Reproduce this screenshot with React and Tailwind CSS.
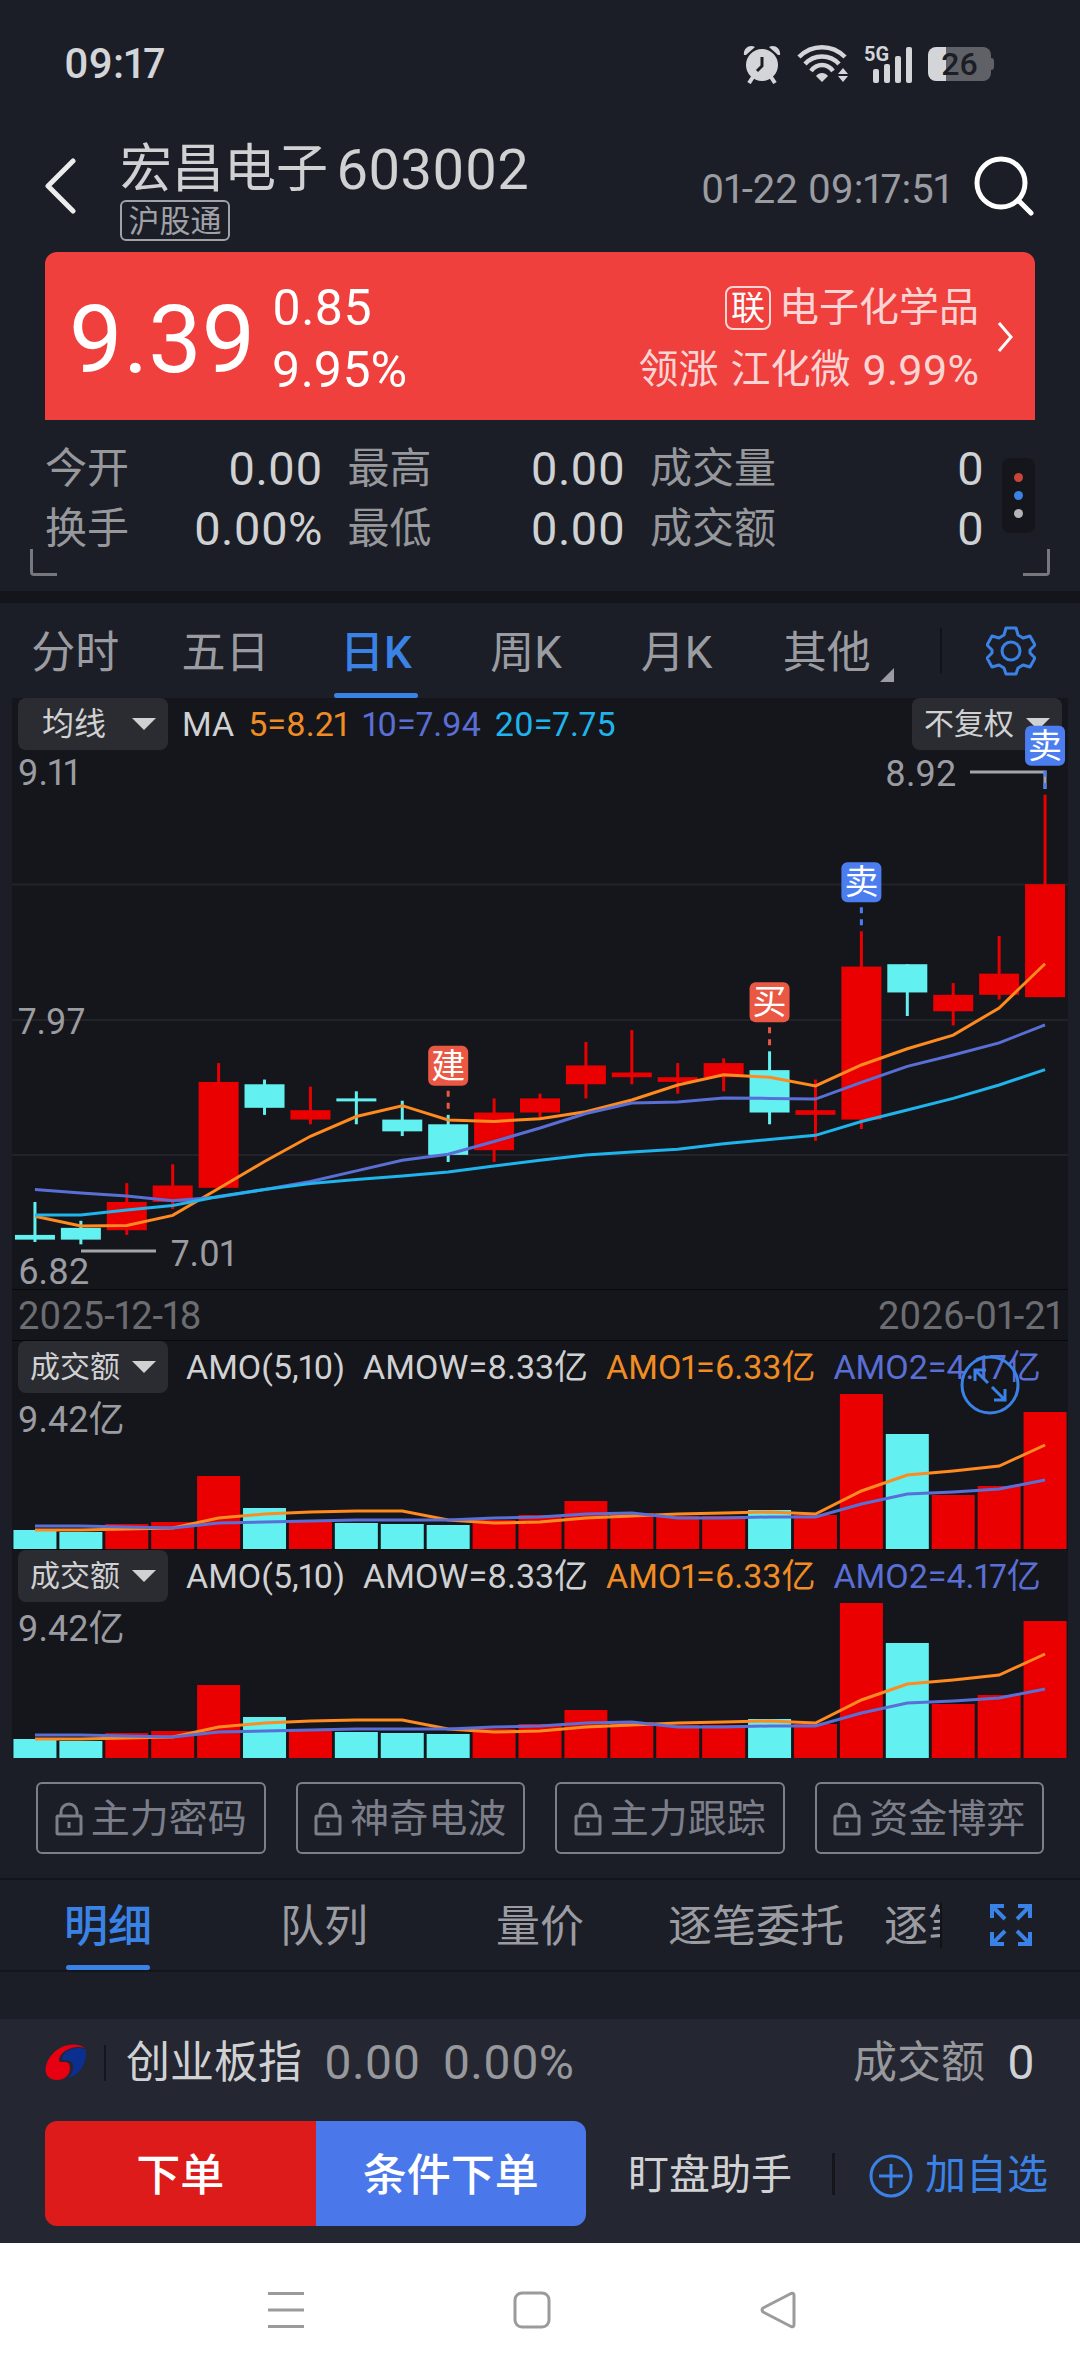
import { Fragment } from "react";

const FONT = "font-['Roboto','Noto_Sans_CJK_SC',sans-serif]";

const UP = "#ea0000";
const DOWN = "#63f0f0";
const ORANGE = "#ff8a1f";
const INDIGO = "#5a6fd6";
const SKY = "#1fb4ec";

// [high, low, body top, body bottom, rising]
const candles = [
  [7.19, 7.02, 7.05, 7.03, false],
  [7.11, 7.01, 7.08, 7.03, false],
  [7.27, 7.05, 7.19, 7.07, true],
  [7.35, 7.16, 7.26, 7.19, true],
  [7.78, 7.25, 7.7, 7.25, true],
  [7.71, 7.56, 7.69, 7.59, false],
  [7.68, 7.52, 7.58, 7.54, true],
  [7.66, 7.52, 7.63, 7.62, false],
  [7.62, 7.47, 7.54, 7.49, false],
  [7.56, 7.36, 7.52, 7.39, false],
  [7.63, 7.36, 7.57, 7.41, true],
  [7.65, 7.54, 7.63, 7.57, true],
  [7.87, 7.63, 7.77, 7.69, true],
  [7.92, 7.69, 7.74, 7.72, true],
  [7.78, 7.65, 7.72, 7.7, true],
  [7.8, 7.66, 7.78, 7.72, true],
  [7.83, 7.52, 7.75, 7.57, false],
  [7.71, 7.45, 7.58, 7.56, true],
  [8.34, 7.5, 8.19, 7.54, true],
  [8.2, 7.98, 8.2, 8.08, false],
  [8.12, 7.94, 8.07, 8.0, true],
  [8.32, 8.05, 8.16, 8.07, true],
  [8.92, 8.06, 8.54, 8.06, true],
];

const ma5 = [7.129, 7.088, 7.09, 7.133, 7.247, 7.362, 7.469, 7.553, 7.599, 7.538, 7.532, 7.544, 7.573, 7.623, 7.687, 7.73, 7.72, 7.683, 7.772, 7.841, 7.899, 8.014, 8.202];
const ma10 = [7.243, 7.228, 7.215, 7.195, 7.211, 7.243, 7.277, 7.322, 7.367, 7.393, 7.447, 7.504, 7.566, 7.61, 7.615, 7.632, 7.63, 7.627, 7.698, 7.766, 7.814, 7.866, 7.942];
const ma20 = [7.135, 7.135, 7.156, 7.175, 7.213, 7.243, 7.268, 7.285, 7.3, 7.317, 7.343, 7.367, 7.39, 7.402, 7.414, 7.437, 7.455, 7.473, 7.532, 7.581, 7.63, 7.687, 7.752];

const amounts = [19, 17, 25, 27, 73, 41, 27, 26, 25, 24, 29, 34, 48, 36, 33, 33, 39, 34, 155, 115, 54, 63, 137];
const amo1 = [19, 19, 20, 21, 31, 35, 37, 38, 38, 29, 26, 27, 31, 33, 35, 36, 37, 35, 58, 74, 78, 83, 104];
const amo2 = [23, 23, 22, 21, 26, 27, 28, 29, 29, 29, 31, 32, 35, 36, 31, 31, 32, 32, 45, 55, 57, 60, 69];

const trades = [
  { day: 9, label: "建", color: "#ea5844" },
  { day: 16, label: "买", color: "#ea5844" },
  { day: 18, label: "卖", color: "#4b7df0" },
  { day: 22, label: "卖", color: "#4b7df0" },
];

const STEP = 1056 / 23;
const cx = (i) => STEP * (i + 0.5);
const py = (p) => (9.11 - p) * 235.4;
const line = (values, y) => values.map((v, i) => `${cx(i)},${y(v)}`).join(" ");

function StatusBar() {
  return (
    <header className="flex h-32 items-center justify-between pr-[86px] pl-16 text-[#d3d5d8]">
      <span className="text-[42px] leading-none font-medium">09:17</span>
      <div className="flex items-center gap-4">
        {/* Alarm */}
        <svg className="h-10 w-[38px]" viewBox="0 0 38 40" fill="none">
          <circle cx="19" cy="21" r="16" fill="currentColor" />
          <path d="M10 33l-4 6M28 33l4 6" stroke="currentColor" strokeWidth="4" />
          <path d="M1 11C0 5 6 0 12 3L3 11zM37 11C38 5 32 0 26 3l9 8z" fill="currentColor" />
          <path d="M19 13v9l-5 5" stroke="#1b1e27" strokeWidth="3" />
        </svg>
        {/* Wi-Fi */}
        <svg className="h-10 w-[51px]" viewBox="0 0 51 40" fill="none" stroke="currentColor" strokeWidth="4.5">
          <path d="M2 13C15 0 35 0 48 13" />
          <path d="M8 20C17 10 33 10 42 20" />
          <path d="M14 27C20 19 30 19 36 27" />
          <path d="M25 38l-6-6c3-4 9-4 12 0z" fill="currentColor" stroke="none" />
          <path d="M46 24l5 6H41zM46 38l5-6H41z" fill="currentColor" stroke="none" />
        </svg>
        {/* Signal */}
        <div className="relative h-10 w-12">
          <span className="absolute top-0 left-0 text-xl leading-5 font-bold">5G</span>
          <svg className="h-10 w-12" viewBox="0 0 48 40" fill="currentColor">
            <rect x="9" y="25" width="6" height="14" rx="2" />
            <rect x="20" y="20" width="6" height="19" rx="2" />
            <rect x="31" y="12" width="6" height="27" rx="2" />
            <rect x="42" y="3" width="6" height="36" rx="2" />
          </svg>
        </div>
        {/* Battery */}
        <div className="flex items-center">
          <div className="flex h-[34px] w-[63px] items-center justify-center rounded-lg bg-linear-to-r from-[#d3d5d8] from-29% to-[#606166] to-29% text-[32px] leading-none font-medium text-[#1b1e27]">
            26
          </div>
          <div className="h-3 w-[3px] rounded-r bg-[#606166]" />
        </div>
      </div>
    </header>
  );
}

function TitleBar() {
  return (
    <div className="flex h-[124px] items-center px-[45px]">
      <button aria-label="返回" className="mb-2 w-[75px]">
        <svg className="h-14 w-8" viewBox="0 0 32 56" fill="none" stroke="#ececec" strokeWidth="5" strokeLinecap="round" strokeLinejoin="round">
          <path d="M28 3L3 28l25 25" />
        </svg>
      </button>
      <div>
        <h1 className="flex items-center gap-2 text-[52px] leading-[60px] text-[#d0d1d3]">
          宏昌电子
          <span className="text-[56px]">603002</span>
        </h1>
        <span className="flex h-[41px] w-[110px] items-center justify-center rounded-md border-2 border-[#a0a2a8] pt-0.5 text-[31px] leading-none text-[#a0a2a8]">
          沪股通
        </span>
      </div>
      <time className="ml-auto text-[40px] leading-none text-[#9b9ca1]">01-22 09:17:51</time>
      <button aria-label="搜索" className="mb-2 ml-[22px]">
        <svg className="block size-[62px]" viewBox="0 0 62 62" fill="none" stroke="#fff" strokeWidth="5" strokeLinecap="round">
          <circle cx="28" cy="28" r="24" />
          <path d="M45 45l13 13" />
        </svg>
      </button>
    </div>
  );
}

function PriceCard() {
  return (
    <section className="mx-[45px] flex h-[168px] items-center rounded-t-xl bg-[#ef403e] pt-1.5 pr-5 pl-6 text-white">
      <span className="text-[95px] leading-none">9.39</span>
      <div className="ml-4 flex flex-col text-[50px] leading-[62px]">
        <span>0.85</span>
        <span>9.95%</span>
      </div>
      <div className="ml-auto flex flex-col items-end text-[40px] leading-[62px] text-[#fbd5d4]">
        <span className="flex items-center gap-2">
          <span className="flex h-[44px] w-[46px] items-center justify-center rounded-lg border-2 border-[#fbd5d4] text-[34px] leading-none text-white">联</span>
          电子化学品
        </span>
        <span className="flex gap-3">
          <span>领涨</span>
          <span>江化微</span>
          <span className="text-[43px]">9.99%</span>
        </span>
      </div>
      <svg className="mb-1 ml-4 h-8 w-5" viewBox="0 0 20 32" fill="none" stroke="currentColor" strokeWidth="3">
        <path d="M4 2l12 14L4 30" />
      </svg>
    </section>
  );
}

const quotes = [
  ["今开", "0.00"],
  ["最高", "0.00"],
  ["成交量", "0"],
  ["换手", "0.00%"],
  ["最低", "0.00"],
  ["成交额", "0"],
];

function Quotes() {
  return (
    <section className="relative flex h-[171px] items-start px-[45px] pt-[18px]">
      <dl className="grid flex-1 grid-cols-[275fr_275fr_331fr] gap-x-[25px]">
        {quotes.map(([label, value]) => (
          <div key={label} className="flex h-[60px] items-center justify-between leading-none">
            <dt className="pt-0.5 text-[42px] text-[#97989c]">{label}</dt>
            <dd className="text-[47px] text-[#d0d1d3]">{value}</dd>
          </div>
        ))}
      </dl>
      <div className="mt-5 ml-[18px] flex h-[75px] w-[33px] flex-col items-center justify-center gap-[9px] rounded-lg bg-[#15161b]">
        <i className="size-[9px] rounded-full bg-[#c9453a]" />
        <i className="size-[9px] rounded-full bg-[#3b82e6]" />
        <i className="size-[9px] rounded-full bg-[#b5b5b8]" />
      </div>
      <i className="absolute bottom-[15px] left-[30px] h-[27px] w-[27px] rounded-bl border-b-[3px] border-l-[3px] border-[#76787d]" />
      <i className="absolute right-[30px] bottom-[15px] h-[27px] w-[27px] rounded-br border-r-[3px] border-b-[3px] border-[#76787d]" />
    </section>
  );
}

function GearIcon() {
  return (
    <svg className="size-[50px]" viewBox="0 0 50 50" fill="none" stroke="#3b82e6" strokeWidth="3" strokeLinejoin="round">
      <path d="M20 2h10l2 7 5 3 7-2 5 9-5 5v3l5 5-5 9-7-2-5 3-2 6H20l-2-6-5-3-7 2-5-9 5-5v-3l-5-5 5-9 7 2 5-3z" />
      <circle cx="25" cy="25" r="9" />
    </svg>
  );
}

function PeriodTabs() {
  const tabs = ["分时", "五日", "日K", "周K", "月K", "其他"];
  return (
    <nav className="flex h-[95px] items-center">
      <div className="grid h-full flex-1 grid-cols-6">
        {tabs.map((tab) => (
          <button
            key={tab}
            className={
              tab === "日K"
                ? "relative h-full pt-1 text-[44px] leading-none font-medium text-[#3b82e6]"
                : "relative h-full pt-1 text-[44px] leading-none text-[#9b9ca1]"
            }
          >
            {tab}
            {tab === "日K" && <i className="absolute bottom-0 left-1/2 h-[5px] w-[84px] -translate-x-1/2 rounded bg-[#3b82e6]" />}
            {tab === "其他" && (
              <svg className="absolute right-2 bottom-4 size-[14px]" viewBox="0 0 14 14" fill="#9b9ca1">
                <path d="M14 0v14H0z" />
              </svg>
            )}
          </button>
        ))}
      </div>
      <div className="ml-[38px] h-[45px] w-0.5 bg-[#111318]" />
      <button aria-label="设置" className="mr-11 ml-11">
        <GearIcon />
      </button>
    </nav>
  );
}

function Dropdown({ label, value, inset }) {
  return (
    <div className="relative">
      <select
        aria-label={label}
        defaultValue={value}
        className={
          inset
            ? "block h-[52px] w-[150px] appearance-none rounded-lg bg-[#2b2c31] pl-6 text-[32px] leading-none text-[#d0d1d3]"
            : "block h-[52px] w-[150px] appearance-none rounded-lg bg-[#2b2c31] pl-3 text-[30px] leading-none text-[#d0d1d3]"
        }
      >
        <option>{value}</option>
      </select>
      <svg className="pointer-events-none absolute top-5 right-3 h-3 w-6" viewBox="0 0 24 12" fill="#d0d1d3">
        <path d="M0 0h24L12 12z" />
      </svg>
    </div>
  );
}

function KLineChart() {
  return (
    <section>
      <div className="flex items-center justify-between px-1.5">
        <div className="flex items-center gap-3.5 text-[34px] leading-none">
          <Dropdown label="指标" value="均线" inset />
          <span className="text-[#d0d1d3]">MA</span>
          <span className="text-[#f08c24]">5=8.21</span>
          <span className="text-[#5a6fd6]">10=7.94</span>
          <span className="text-[#1fb4ec]">20=7.75</span>
        </div>
        <Dropdown label="复权" value="不复权" />
      </div>
      <svg className="relative block w-full overflow-visible text-[36px]" viewBox="0 0 1056 540">
        {/* Grid */}
        <path d="M0 134.5h1056M0 270h1056M0 405h1056" stroke="#212329" strokeWidth="2" />
        <path d="M0 539.5h1056" stroke="#08090c" />

        {/* Candles */}
        {candles.map(([high, low, top, bottom, up], i) => (
          <g key={i} fill={up ? UP : DOWN}>
            <rect x={cx(i) - 1.5} y={py(high)} width="3" height={py(low) - py(high)} />
            <rect x={cx(i) - 20} y={py(top)} width="40" height={Math.max(py(bottom) - py(top), 3)} />
          </g>
        ))}

        {/* Moving averages */}
        <g fill="none" strokeWidth="3">
          <polyline points={line(ma5, py)} stroke={ORANGE} />
          <polyline points={line(ma10, py)} stroke={INDIGO} />
          <polyline points={line(ma20, py)} stroke={SKY} />
        </g>

        {/* High and low marks */}
        <path d="M958 22h75v17M69 501h75" fill="none" stroke="#a4a5a9" strokeWidth="3" />
        <g fill="#9b9ca1">
          <text x="873" y="36">8.92</text>
          <text x="159" y="516">7.01</text>
          <text x="6" y="35">9.11</text>
          <text x="6" y="284">7.97</text>
          <text x="6" y="534">6.82</text>
        </g>

        {/* Trade badges */}
        {trades.map(({ day, label, color }) => {
          const y = py(candles[day][0]) - 69;
          return (
            <Fragment key={day}>
              <path d={`M${cx(day)} ${y + 45}v22`} stroke={color} strokeWidth="3" strokeDasharray="6 6" />
              <rect x={cx(day) - 20} y={y} width="40" height="40" rx="6" fill={color} />
              <text x={cx(day)} y={y + 32} textAnchor="middle" fill="#fff" className="text-[34px]">
                {label}
              </text>
            </Fragment>
          );
        })}
      </svg>
      <div className="flex h-[50px] items-center justify-between px-1.5 pt-0.5 text-[38px] leading-none text-[#6c6d71]">
        <time>2025-12-18</time>
        <time>2026-01-21</time>
      </div>
    </section>
  );
}

function AmountChart({ expandable }) {
  return (
    <section className="relative border-t border-[#08090c]">
      <div className="flex items-center gap-[18px] px-1.5 text-[34px] leading-none whitespace-nowrap">
        <Dropdown label="副图指标" value="成交额" />
        <span className="text-[#d0d1d3]">AMO(5,10)</span>
        <span className="text-[#d0d1d3]">AMOW=8.33亿</span>
        <span className="text-[#f08c24]">AMO1=6.33亿</span>
        <span className="text-[#5a6fd6]">AMO2=4.17亿</span>
      </div>
      <svg className="block w-full text-[36px]" viewBox="0 0 1056 156">
        {amounts.map((h, i) => (
          <rect key={i} x={cx(i) - 21.5} y={156 - h} width="43" height={h} fill={candles[i][4] ? UP : DOWN} />
        ))}
        <g fill="none" strokeWidth="3">
          <polyline points={line(amo1, (v) => 156 - v)} stroke={ORANGE} />
          <polyline points={line(amo2, (v) => 156 - v)} stroke={INDIGO} />
        </g>
        <text x="6" y="39" fill="#9b9ca1">9.42亿</text>
      </svg>
      {expandable && (
        <button aria-label="放大" className="absolute top-[14px] right-12">
          <svg className="block size-[60px]" viewBox="0 0 60 60" fill="none" stroke="#3b82e6" strokeWidth="3">
            <circle cx="30" cy="30" r="28" />
            <path d="M15 26V15h11M15 15l13 13M45 34v11H34M45 45L32 32" />
          </svg>
        </button>
      )}
    </section>
  );
}

function LockedTools() {
  return (
    <section className="grid grid-cols-4 gap-[30px] px-9 py-6">
      {["主力密码", "神奇电波", "主力跟踪", "资金博弈"].map((name) => (
        <button key={name} className="flex h-[72px] items-center justify-center gap-2 rounded-md border-2 border-[#7c7e8a] pt-0.5 text-[39px] leading-none whitespace-nowrap text-[#7c7e8a]">
          <svg className="h-[34px] w-7 shrink-0" viewBox="0 0 28 34" fill="none" stroke="currentColor" strokeWidth="3">
            <rect x="2" y="14" width="24" height="18" rx="1" />
            <path d="M6 14v-4a8 8 0 0116 0v4M14 20v6" />
          </svg>
          {name}
        </button>
      ))}
    </section>
  );
}

function DetailTabs() {
  return (
    <nav className="flex h-[94px] items-center border-y-2 border-[#14151b]">
      <div className="flex h-full min-w-0 flex-1 overflow-hidden">
        {["明细", "队列", "量价", "逐笔委托", "逐笔成交"].map((tab) => (
          <button
            key={tab}
            className={
              tab === "明细"
                ? "relative h-full w-[216px] shrink-0 pt-1 text-[44px] leading-none font-medium text-[#3b82e6]"
                : "relative h-full w-[216px] shrink-0 pt-1 text-[44px] leading-none text-[#9b9ca1]"
            }
          >
            {tab}
            {tab === "明细" && <i className="absolute bottom-0 left-1/2 h-[5px] w-[84px] -translate-x-1/2 rounded bg-[#3b82e6]" />}
          </button>
        ))}
      </div>
      <div className="h-[45px] w-0.5 bg-[#111318]" />
      <button aria-label="全屏" className="mx-12">
        <svg className="size-[42px]" viewBox="0 0 42 42" fill="none" stroke="#3b82e6" strokeWidth="4">
          <path d="M2 14V2h12M2 2l13 13M28 2h12v12M40 2L27 15M2 28v12h12M2 40l13-13M40 28v12H28M40 40L27 27" />
        </svg>
      </button>
    </nav>
  );
}

function BottomPanel() {
  return (
    <footer className="mt-[47px] h-[224px] bg-[#242631] leading-none">
      <div className="flex h-[86px] items-center px-[45px] pt-0.5 text-[44px]">
        <svg className="h-[38px] w-[42px]" viewBox="0 0 42 38">
          <path d="M40 4C32-2 15-1 5 13c-8 12-5 23 7 23 11 0 15-10 12-16-2-4-10 0-10-4C14 9 27 0 40 4z" fill="#e60012" />
          <path d="M41 6c1 13-6 26-19 28 6-5 7-10 6-14-2-6-11-1-11-6C19 6 31 1 41 6z" fill="#0b2f8f" />
        </svg>
        <div className="ml-[17px] h-9 w-0.5 bg-[#15161b]" />
        <span className="ml-5 text-[#d0d1d3]">创业板指</span>
        <span className="ml-[22px] text-[48px] text-[#97989c]">0.00</span>
        <span className="ml-[22px] text-[48px] text-[#97989c]">0.00%</span>
        <span className="ml-auto text-[#97989c]">成交额</span>
        <span className="ml-[22px] text-[48px] text-[#d0d1d3]">0</span>
      </div>
      <div className="mt-4 flex h-[105px] items-center pr-8 pl-[45px] text-[41px]">
        <button className="h-full flex-1 rounded-l-xl bg-[#dc1b1a] pt-1 text-[44px] font-medium text-white">下单</button>
        <button className="h-full flex-1 rounded-r-xl bg-[#4a77e9] pt-1 text-[44px] font-medium text-white">条件下单</button>
        <button className="ml-[42px] pt-1 text-[#d0d1d3]">盯盘助手</button>
        <div className="ml-10 h-[42px] w-[3px] bg-[#15161b]" />
        <button className="ml-[34px] flex items-center gap-3 pt-1 text-[#3b82e6]">
          <svg className="size-[44px]" viewBox="0 0 44 44" fill="none" stroke="currentColor" strokeWidth="3">
            <circle cx="22" cy="22" r="20" />
            <path d="M22 10v24M10 22h24" />
          </svg>
          加自选
        </button>
      </div>
    </footer>
  );
}

function SystemNav() {
  return (
    <nav className="flex h-[133px] items-center justify-center gap-[208px] bg-white pr-4">
      <button aria-label="最近任务">
        <svg className="size-[38px]" viewBox="0 0 38 38" fill="none" stroke="#9b9b9b" strokeWidth="3">
          <path d="M1 2.500h36M1 19h36M1 35.500h36" />
        </svg>
      </button>
      <button aria-label="主屏幕">
        <svg className="size-[38px]" viewBox="0 0 38 38" fill="none" stroke="#9b9b9b" strokeWidth="3">
          <rect x="2" y="2" width="34" height="34" rx="7" />
        </svg>
      </button>
      <button aria-label="返回上一级">
        <svg className="size-[38px]" viewBox="0 0 38 38" fill="none" stroke="#9b9b9b" strokeWidth="3" strokeLinejoin="round">
          <path d="M32 2.500L4 17q-2 2 0 4l28 14.500q3 1 3-2v-29q0-3-3-2z" />
        </svg>
      </button>
    </nav>
  );
}

function App() {
  return (
    <div className={`${FONT} min-h-screen bg-[#1b1e27] proportional-nums`}>
      <StatusBar />
      <TitleBar />
      <PriceCard />
      <Quotes />
      <div className="h-3 bg-[#14151a]" />
      <PeriodTabs />
      <main className="mx-3 bg-[#15161b]">
        <KLineChart />
        <AmountChart expandable />
        <AmountChart />
      </main>
      <LockedTools />
      <DetailTabs />
      <BottomPanel />
      <SystemNav />
    </div>
  );
}

export default App;
